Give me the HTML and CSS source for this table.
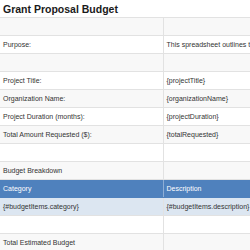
FILE: index.html
```html
<!DOCTYPE html>
<html>
<head>
<meta charset="utf-8">
<link rel="stylesheet" href="styles.css">
</head>
<body>
<table class="sheet">
  <colgroup><col class="c1"><col class="c2"></colgroup>
  <tr class="title-row"><td colspan="2" class="title">Grant Proposal Budget</td></tr>
  <tr><td></td><td></td></tr>
  <tr><td>Purpose:</td><td>This spreadsheet outlines the budget for the grant proposal.</td></tr>
  <tr><td></td><td></td></tr>
  <tr><td>Project Title:</td><td>{projectTitle}</td></tr>
  <tr><td>Organization Name:</td><td>{organizationName}</td></tr>
  <tr><td>Project Duration (months):</td><td>{projectDuration}</td></tr>
  <tr><td>Total Amount Requested ($):</td><td>{totalRequested}</td></tr>
  <tr><td></td><td></td></tr>
  <tr><td>Budget Breakdown</td><td></td></tr>
  <tr class="head"><td>Category</td><td>Description</td></tr>
  <tr class="item"><td>{#budgetItems.category}</td><td>{#budgetItems.description}</td></tr>
  <tr><td></td><td></td></tr>
  <tr><td>Total Estimated Budget</td><td></td></tr>
</table>
</body>
</html>
```
FILE: styles.css
```css
html, body {
  margin: 0;
  padding: 0;
  overflow: hidden;
  background: #ffffff;
}
.sheet {
  border-collapse: collapse;
  table-layout: fixed;
  width: 400px;
  font-family: "Liberation Sans", Arial, sans-serif;
  font-size: 7px;
  color: #333333;
}
.c1 { width: 163px; }
.c2 { width: 237px; }
.sheet td {
  height: 17px;
  padding: 0 3px;
  border-bottom: 1px solid #e2e2e2;
  border-right: 1px solid #e2e2e2;
  white-space: nowrap;
  overflow: hidden;
  vertical-align: middle;
}
.sheet tr:nth-child(even) td { background: #f8f8f8; }
.title-row td.title {
  font-weight: bold;
  font-size: 10.5px;
  color: #1a1a1a;
  border-right: none;
  background: #ffffff;
}
.sheet tr.head td {
  background: #4f81bd;
  color: #ffffff;
  border-right-color: #8eaed6;
  border-bottom-color: #4f81bd;
}
.sheet tr.item td {
  background: #dce6f1;
}
```
